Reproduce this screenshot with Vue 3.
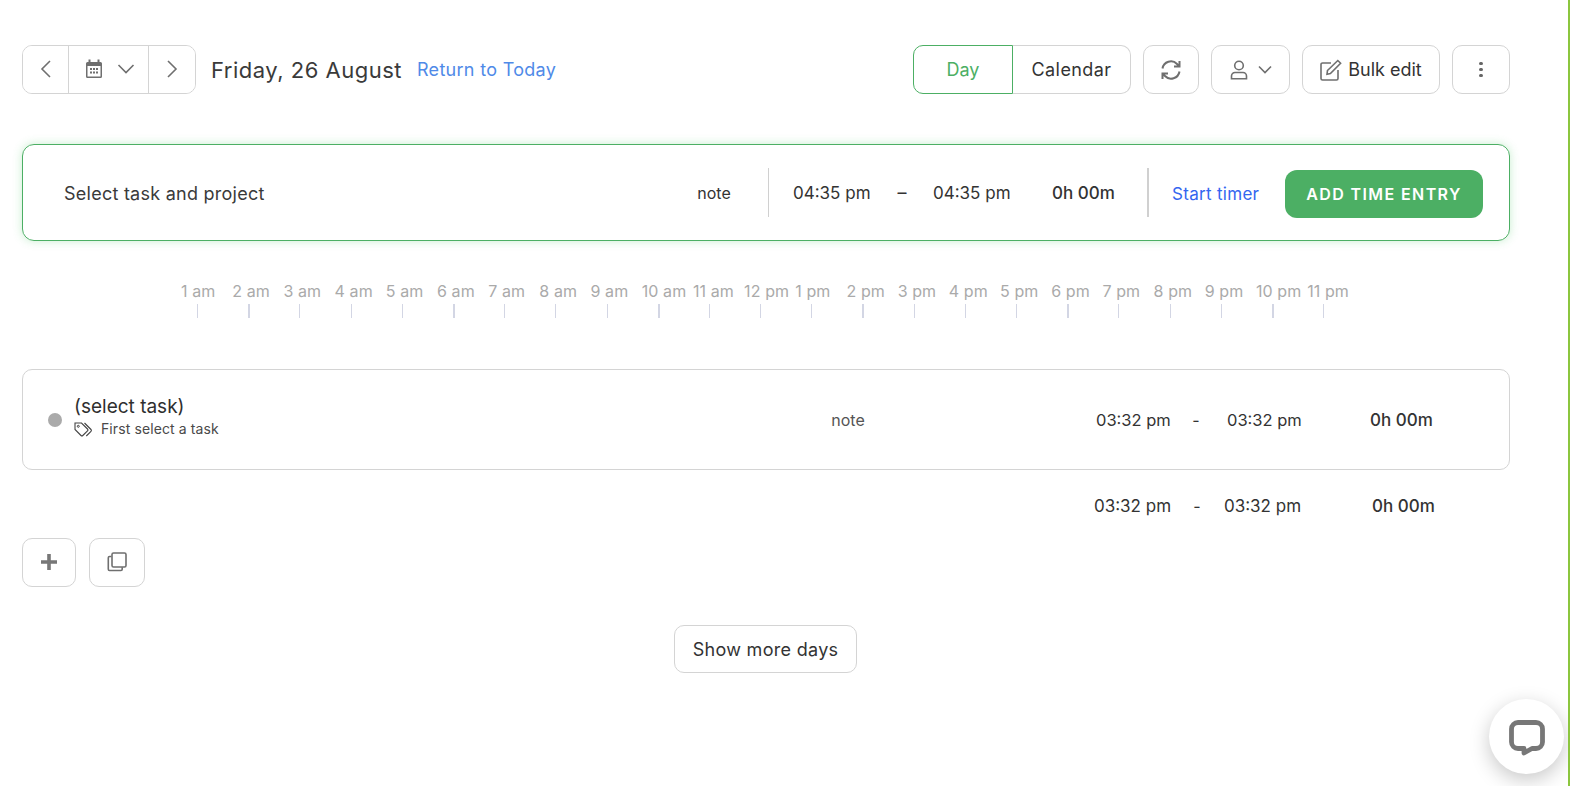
<template>
  <div class="page">
    <div class="toolbar">
      <div class="nav-group">
        <button class="nav-btn arrow">
          <svg width="14" height="20" viewBox="0 0 14 20"><path d="M11 2 3 10l8 8" class="stroke thin" /></svg>
        </button>
        <button class="nav-btn date">
          <svg width="18" height="20" viewBox="0 0 18 20">
            <path d="M1 4.500a1.500 1.500 0 0 1 1.500-1.500h13A1.500 1.500 0 0 1 17 4.500v13a1.500 1.500 0 0 1-1.500 1.500h-13A1.500 1.500 0 0 1 1 17.500z" fill="#6f6f6f" />
            <path d="M4.500 0.500v3M13.500 0.500v3" stroke="#6f6f6f" stroke-width="2" />
            <rect x="2.500" y="7" width="13" height="10.500" fill="#fff" />
            <path d="M5 9h2v2H5zM8 9h2v2H8zM11 9h2v2h-2zM5 12.500h2v2H5zM8 12.500h2v2H8zM11 12.500h2v2h-2z" fill="#6f6f6f" />
          </svg>
          <svg width="18" height="12" viewBox="0 0 18 12"><path d="m1.500 2 7.500 7.500L16.500 2" class="stroke thin" /></svg>
        </button>
        <button class="nav-btn arrow last">
          <svg width="14" height="20" viewBox="0 0 14 20"><path d="m3 2 8 8-8 8" class="stroke thin" /></svg>
        </button>
      </div>
      <h1 class="day-title">Friday, 26 August</h1>
      <a class="today-link">Return to Today</a>

      <div class="toolbar-right">
        <div class="view-switch">
          <button class="view-btn active">Day</button>
          <button class="view-btn cal">Calendar</button>
        </div>
        <button class="tool-btn refresh">
          <svg width="20" height="22" viewBox="0 0 20 22">
            <path d="M1.500 9.500A8.500 8.500 0 0 1 16 5l2.500 2.500M18.500 2v5.500H13M18.500 12.500A8.500 8.500 0 0 1 4 17l-2.500-2.500M1.500 20v-5.500H7" class="stroke" />
          </svg>
        </button>
        <button class="tool-btn user">
          <svg width="18" height="20" viewBox="0 0 18 20">
            <circle cx="9" cy="5.500" r="4.300" class="stroke thin" />
            <path d="M1.500 18.800v-2.800a3.500 3.500 0 0 1 3.500-3.500h8a3.500 3.500 0 0 1 3.500 3.500v2.800z" class="stroke thin" />
          </svg>
          <svg width="14" height="9" viewBox="0 0 14 9"><path d="m1 1.500 6 6 6-6" class="stroke thin" /></svg>
        </button>
        <button class="tool-btn bulk">
          <svg width="22" height="22" viewBox="0 0 22 22">
            <path d="M11 4H2.500A1.500 1.500 0 0 0 1 5.500v14A1.500 1.500 0 0 0 2.500 21h14a1.500 1.500 0 0 0 1.500-1.500V11" class="stroke thin" />
            <path d="M7.500 11.500 17.800 1.500l2.800 2.800L10.400 14.500l-3.400.7z" class="stroke thin" />
          </svg>
          <span>Bulk edit</span>
        </button>
        <button class="tool-btn more">
          <span class="dots"><i></i><i></i><i></i></span>
        </button>
      </div>
    </div>

    <div class="entry-card">
      <div class="entry-task">Select task and project</div>
      <div class="entry-note">note</div>
      <div class="vline"></div>
      <div class="entry-time first">04:35 pm</div>
      <div class="entry-dash">–</div>
      <div class="entry-time">04:35 pm</div>
      <div class="entry-duration">0h 00m</div>
      <div class="vline thick"></div>
      <a class="start-timer">Start timer</a>
      <button class="add-btn">ADD TIME ENTRY</button>
    </div>

    <div class="timeline">
      <div v-for="(h, i) in hours" :key="h" class="hour">
        <span class="hour-label">{{ h }}</span>
        <span class="tick" :class="{ strong: i % 4 === 1 }"></span>
      </div>
    </div>

    <div class="task-row">
      <span class="task-dot"></span>
      <div class="task-info">
        <div class="task-name">(select task)</div>
        <div class="task-sub">
          <svg width="19" height="15" viewBox="0 0 19 15">
            <path d="M1 1h6.500l6 6a1.300 1.300 0 0 1 0 1.800l-4.700 4.700a1.300 1.300 0 0 1-1.800 0L1 7.500z" fill="none" stroke="#444" stroke-width="1.100" />
            <path d="M10.500 1 17 7.500a1.300 1.300 0 0 1 0 1.800L12.300 14" fill="none" stroke="#444" stroke-width="1.100" />
            <circle cx="4.300" cy="4.300" r="1" fill="none" stroke="#444" />
          </svg>
          <span>First select a task</span>
        </div>
      </div>
      <div class="task-note">note</div>
      <div class="row-time">03:32 pm</div>
      <div class="row-dash">-</div>
      <div class="row-time">03:32 pm</div>
      <div class="row-duration">0h 00m</div>
    </div>

    <div class="totals-row">
      <div class="row-time">03:32 pm</div>
      <div class="row-dash">-</div>
      <div class="row-time">03:32 pm</div>
      <div class="row-duration">0h 00m</div>
    </div>

    <div class="actions">
      <button class="action-btn plus">
        <svg width="18" height="18" viewBox="0 0 18 18"><path d="M9 1v16M1 9h16" stroke="#777" stroke-width="3.600" /></svg>
      </button>
      <button class="action-btn copy">
        <svg width="20" height="20" viewBox="0 0 20 20">
          <path d="M4.500 4.500h-2a1.200 1.200 0 0 0-1.200 1.200v11.600a1.200 1.200 0 0 0 1.200 1.200h11.500a1.200 1.200 0 0 0 1.200-1.200v-2" class="stroke thin" />
          <rect x="5" y="1" width="14" height="14" rx="1.500" class="stroke thin" />
        </svg>
      </button>
    </div>

    <div class="more-wrap">
      <button class="more-days">Show more days</button>
    </div>

    <div class="chat-bubble">
      <svg width="36" height="36" viewBox="0 0 36 36">
        <path d="M9 2.500h18a6.500 6.500 0 0 1 6.500 6.500v13a6.500 6.500 0 0 1-6.500 6.500h-4l-8 4.500v-4.500H9A6.500 6.500 0 0 1 2.500 22V9A6.500 6.500 0 0 1 9 2.500z" fill="none" stroke="#777" stroke-width="4.800" stroke-linejoin="round" />
      </svg>
    </div>
    <div class="edge-strip"></div>
  </div>
</template>

<script setup>
const hours = [
  '1 am', '2 am', '3 am', '4 am', '5 am', '6 am', '7 am', '8 am', '9 am', '10 am', '11 am', '12 pm',
  '1 pm', '2 pm', '3 pm', '4 pm', '5 pm', '6 pm', '7 pm', '8 pm', '9 pm', '10 pm', '11 pm'
]
</script>

<style>
html, body {
  margin: 0;
  background: #fff;
  overflow: hidden;
}
</style>

<style scoped>
.page {
  position: relative;
  width: 1570px;
  height: 786px;
  box-sizing: border-box;
  padding: 45px 60px 0 22px;
  font-family: Inter, "Noto Sans", sans-serif;
  color: #333;
  overflow: hidden;
}
button {
  font-family: inherit;
  background: #fff;
  padding: 0;
  color: #333;
}
.stroke {
  fill: none;
  stroke: #6f6f6f;
  stroke-width: 2;
}
.stroke.thin {
  stroke-width: 1.600;
}
.toolbar {
  display: flex;
  align-items: center;
  height: 49px;
}
.nav-group {
  display: flex;
  width: 174px;
  height: 49px;
  box-sizing: border-box;
  border: 1px solid #d4d4d4;
  border-radius: 10px;
  overflow: hidden;
}
.nav-btn {
  display: flex;
  align-items: center;
  justify-content: center;
  border: 0;
  padding-bottom: 2px;
}
.nav-btn.arrow {
  width: 45px;
}
.nav-btn.arrow.last {
  width: 46px;
}
.nav-btn.date {
  width: 81px;
  gap: 14px;
  padding-left: 2px;
  border-left: 1px solid #d4d4d4;
  border-right: 1px solid #d4d4d4;
}
.day-title {
  margin: 0 0 0 15px;
  font-size: 22px;
  font-weight: 400;
  letter-spacing: 0.5px;
  color: #3a3a3a;
}
.today-link {
  margin-left: 15px;
  font-size: 18px;
  letter-spacing: 0.3px;
  color: #4f8ae8;
}
.toolbar-right {
  margin-left: auto;
  display: flex;
  gap: 12px;
}
.view-switch {
  display: flex;
  height: 49px;
}
.view-btn {
  font-size: 18px;
  border: 1px solid #d4d4d4;
}
.view-btn.active {
  width: 100px;
  color: #4caf64;
  border-color: #4caf64;
  border-radius: 10px 0 0 10px;
}
.view-btn.cal {
  width: 118px;
  border-left: 0;
  border-radius: 0 10px 10px 0;
  letter-spacing: 0.4px;
}
.tool-btn {
  display: flex;
  align-items: center;
  justify-content: center;
  height: 49px;
  box-sizing: border-box;
  border: 1px solid #d4d4d4;
  border-radius: 10px;
  font-size: 18px;
}
.tool-btn.refresh {
  width: 56px;
}
.tool-btn.user {
  width: 79px;
  gap: 10px;
}
.tool-btn.bulk {
  width: 138px;
  gap: 6px;
}
.tool-btn.more {
  width: 58px;
}
.dots {
  display: flex;
  flex-direction: column;
  gap: 2.500px;
}
.dots i {
  display: block;
  width: 3.500px;
  height: 3.500px;
  border-radius: 50%;
  background: #666;
}
.entry-card {
  display: flex;
  align-items: center;
  height: 97px;
  box-sizing: border-box;
  margin-top: 50px;
  padding: 0 26px 0 41px;
  border: 1px solid #4caf64;
  border-radius: 12px;
  box-shadow: 0 0 10px rgba(76, 200, 100, 0.3);
}
.entry-task {
  width: 620px;
  margin-top: 2px;
  font-size: 18px;
  letter-spacing: 0.25px;
  color: #3a3a3a;
}
.entry-note {
  width: 60px;
  margin-right: 24px;
  text-align: center;
  font-size: 16px;
}
.vline {
  width: 1px;
  height: 49px;
  background: #d0d0d0;
  flex: none;
}
.vline.thick {
  width: 2px;
}
.entry-time {
  width: 78px;
  font-size: 17px;
  white-space: nowrap;
}
.entry-time.first {
  margin-left: 24px;
}
.entry-dash {
  width: 62px;
  text-align: center;
  font-size: 18px;
}
.entry-duration {
  width: 63px;
  margin: 0 32px 0 41px;
  font-size: 17px;
  font-weight: 500;
  white-space: nowrap;
}
.start-timer {
  margin: 2px 0 0 23px;
  width: 87px;
  font-size: 17px;
  letter-spacing: 0.3px;
  color: #3366f0;
  white-space: nowrap;
}
.add-btn {
  margin: 2px 0 0 26px;
  width: 198px;
  height: 48px;
  border: 0;
  border-radius: 12px;
  background: #4caf64;
  color: #fff;
  font-size: 16px;
  font-weight: 600;
  letter-spacing: 1.400px;
  flex: none;
}
.timeline {
  display: flex;
  margin: 40px 0 0 159px;
}
.hour {
  display: flex;
  flex-direction: column;
  align-items: flex-start;
  width: 51.200px;
  flex: none;
}
.hour-label {
  font-size: 16px;
  letter-spacing: 0.1px;
  line-height: 20px;
  color: #aaa;
  white-space: nowrap;
}
.tick {
  margin: 3px 0 0 16px;
  width: 1px;
  height: 14px;
  background: #d3d6e4;
}
.tick.strong {
  width: 2px;
}
.task-row {
  display: flex;
  align-items: center;
  height: 101px;
  box-sizing: border-box;
  margin-top: 51px;
  padding-left: 25px;
  border: 1px solid #d4d4d4;
  border-radius: 10px;
}
.task-dot {
  width: 14px;
  height: 14px;
  border-radius: 50%;
  background: #aaa;
  flex: none;
}
.task-info {
  width: 744px;
  margin: 0 0 5px 12px;
}
.task-name {
  font-size: 19px;
  line-height: 24px;
  color: #2f2f2f;
}
.task-sub {
  display: flex;
  align-items: center;
  gap: 8px;
  font-size: 14px;
  letter-spacing: 0.1px;
  line-height: 20px;
  color: #4a4a4a;
}
.task-note {
  width: 60px;
  text-align: center;
  font-size: 16px;
  color: #555;
  margin-right: 218px;
}
.row-time {
  width: 74px;
  font-size: 16.500px;
  white-space: nowrap;
}
.row-dash {
  width: 57px;
  box-sizing: border-box;
  padding-right: 5px;
  text-align: center;
  font-size: 16px;
}
.row-duration {
  margin-left: 69px;
  font-size: 17px;
  font-weight: 500;
  white-space: nowrap;
}
.totals-row {
  display: flex;
  align-items: center;
  height: 24px;
  margin-top: 24px;
  padding-left: 1072px;
}
.totals-row .row-time {
  width: 76px;
  font-size: 17px;
}
.totals-row .row-dash {
  width: 54px;
  padding-right: 0;
}
.totals-row .row-duration {
  margin-left: 72px;
}
.actions {
  display: flex;
  gap: 13px;
  margin-top: 20px;
}
.action-btn {
  display: flex;
  align-items: center;
  justify-content: center;
  height: 49px;
  box-sizing: border-box;
  border: 1px solid #d4d4d4;
  border-radius: 10px;
}
.action-btn.plus {
  width: 54px;
  padding-bottom: 2px;
}
.action-btn.copy {
  width: 56px;
  padding-bottom: 2px;
}
.more-wrap {
  margin-top: 38px;
  padding-left: 652px;
}
.more-days {
  width: 183px;
  height: 48px;
  border: 1px solid #d4d4d4;
  border-radius: 10px;
  font-size: 18px;
  letter-spacing: 0.3px;
}
.chat-bubble {
  position: absolute;
  left: 1489px;
  top: 699px;
  width: 75px;
  height: 75px;
  box-sizing: border-box;
  padding-top: 3px;
  display: flex;
  align-items: center;
  justify-content: center;
  border-radius: 50%;
  background: #fff;
  box-shadow: 0 6px 20px rgba(0, 0, 0, 0.22);
}
.edge-strip {
  position: absolute;
  right: 0;
  top: 0;
  bottom: 0;
  width: 2px;
  background: #8cc63f;
}
</style>
